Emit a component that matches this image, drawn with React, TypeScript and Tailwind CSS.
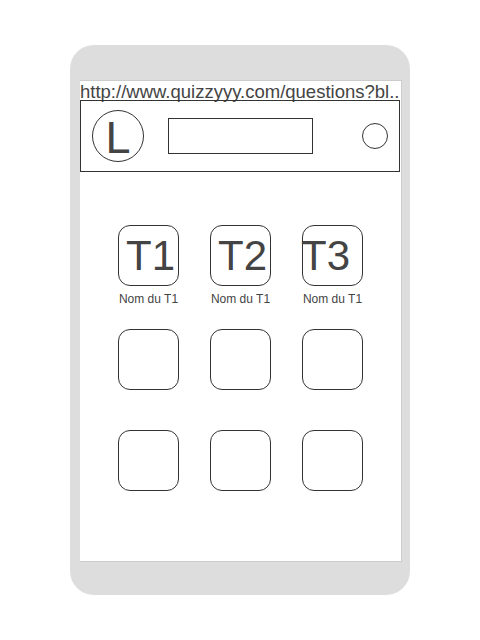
const Tile = ({ label, shift }: { label?: string; shift?: string }) => (
  <div className="flex flex-col items-center w-[61px]">
    <div className="w-[61px] h-[61px] rounded-[12px] border border-[#333] flex items-center justify-start overflow-visible text-[42px] leading-none text-[#444]">
      {label && <span className={`whitespace-nowrap ${shift ?? ""}`}>{label}</span>}
    </div>
  </div>
);

export default function App() {
  const row = "flex gap-[31px] pl-[38px]";
  return (
    <div
      className="w-[480px] h-[640px] bg-white flex justify-center pt-[45px]"
      style={{ fontFamily: "'Liberation Sans', Arial, sans-serif" }}
    >
      <div className="w-[340px] h-[550px] bg-[#dddddd] rounded-[24px] pt-[35px] pl-[10px]">
        <div className="w-[322px] h-[482px] bg-white border-t border-r border-b border-[#cccccc] flex flex-col">
          <div className="h-[19px] text-[18.5px] leading-[20px] text-[#444] whitespace-nowrap pt-px">
            http://www.quizzyyy.com/questions?bl..
          </div>
          <div className="w-[320px] h-[72px] border border-[#333] flex items-center pl-[11px] pr-[11px]">
            <div className="w-[52px] h-[52px] rounded-full border border-[#333] flex items-center justify-center text-[45px] leading-none text-[#444] pt-[3px]">
              L
            </div>
            <div className="w-[145px] h-[36px] border border-[#333] ml-[24px]" />
            <div className="w-[26px] h-[26px] rounded-full border border-[#333] ml-auto" />
          </div>
          <div className="flex flex-col pt-[53px]">
            <div className={row}>
              <div className="flex flex-col items-center">
                <Tile label="T1" shift="ml-[7px]" />
                <div className="text-[12px] text-[#444] mt-[4px] whitespace-nowrap">Nom du T1</div>
              </div>
              <div className="flex flex-col items-center">
                <Tile label="T2" shift="ml-[7px]" />
                <div className="text-[12px] text-[#444] mt-[4px] whitespace-nowrap">Nom du T1</div>
              </div>
              <div className="flex flex-col items-center">
                <Tile label="T3" shift="-ml-[2px]" />
                <div className="text-[12px] text-[#444] mt-[4px] whitespace-nowrap">Nom du T1</div>
              </div>
            </div>
            <div className={`${row} mt-[21px]`}>
              <Tile />
              <Tile />
              <Tile />
            </div>
            <div className={`${row} mt-[40px]`}>
              <Tile />
              <Tile />
              <Tile />
            </div>
          </div>
        </div>
      </div>
    </div>
  );
}
